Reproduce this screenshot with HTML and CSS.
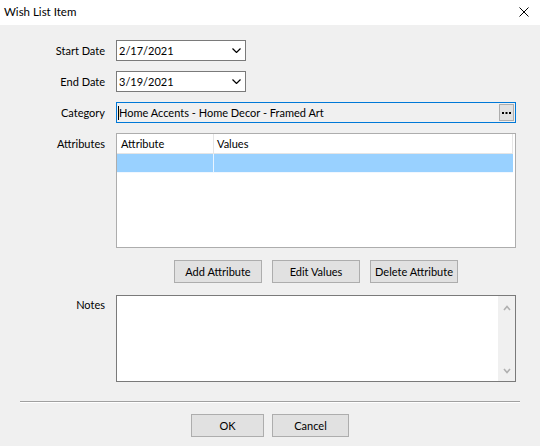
FILE: index.html
```html
<!DOCTYPE html>
<html>
<head>
<meta charset="utf-8">
<link rel="stylesheet" href="styles.css">
</head>
<body>
<div class="window">
  <div class="titlebar">
    <span class="title">Wish List Item</span>
    <svg class="close" width="10" height="10" viewBox="0 0 10 10"><path d="M0.5 0.5 L9.5 9.5 M9.5 0.5 L0.5 9.5" stroke="#000" stroke-width="1" fill="none"/></svg>
  </div>
  <div class="content">
    <div class="form">
      <label class="lbl">Start Date</label>
      <div class="combo"><span class="val">2/17/2021</span><svg class="chev" width="9" height="5" viewBox="0 0 9 5"><path d="M0.5 0.5 L4.5 4.5 L8.5 0.5" stroke="#000" stroke-width="1.2" fill="none"/></svg></div>

      <label class="lbl">End Date</label>
      <div class="combo"><span class="val">3/19/2021</span><svg class="chev" width="9" height="5" viewBox="0 0 9 5"><path d="M0.5 0.5 L4.5 4.5 L8.5 0.5" stroke="#000" stroke-width="1.2" fill="none"/></svg></div>

      <label class="lbl">Category</label>
      <div class="category"><span class="caret"></span><span class="val">Home Accents - Home Decor - Framed Art</span><span class="ellipsis"><svg width="9" height="2" viewBox="0 0 9 2"><rect x="0" y="0" width="2" height="2" fill="#000"/><rect x="3.5" y="0" width="2" height="2" fill="#000"/><rect x="7" y="0" width="2" height="2" fill="#000"/></svg></span></div>

      <label class="lbl lbl-top">Attributes</label>
      <div class="list">
        <div class="lrow header"><div class="c1">Attribute</div><div class="c2">Values</div></div>
        <div class="lrow selected"><div class="c1"></div><div class="c2"></div></div>
      </div>

      <div></div>
      <div class="btnrow">
        <button class="btn">Add Attribute</button>
        <button class="btn">Edit Values</button>
        <button class="btn">Delete Attribute</button>
      </div>

      <label class="lbl lbl-top notes-lbl">Notes</label>
      <div class="notes">
        <div class="notes-area"></div>
        <div class="scroll">
          <svg width="8" height="6" viewBox="0 0 8 6"><path d="M1 5 L4 1.5 L7 5" stroke="#b0b0b0" stroke-width="1.6" fill="none"/></svg>
          <svg width="8" height="6" viewBox="0 0 8 6"><path d="M1 1 L4 4.5 L7 1" stroke="#b0b0b0" stroke-width="1.6" fill="none"/></svg>
        </div>
      </div>
    </div>
    <div class="sep"></div>
    <div class="footer">
      <button class="btn ok">OK</button>
      <button class="btn cancel">Cancel</button>
    </div>
  </div>
</div>
</body>
</html>
```
FILE: styles.css
```css
html, body {
  margin: 0;
  padding: 0;
  background: #f0f0f0;
}
body {
  font-family: Lato, "Noto Sans", sans-serif;
  font-size: 11px;
  color: #000;
  width: 540px;
  height: 446px;
  overflow: hidden;
}
.window {
  width: 540px;
  height: 446px;
  display: flex;
  flex-direction: column;
}
.titlebar {
  height: 25px;
  background: #fff;
  display: flex;
  align-items: center;
  justify-content: space-between;
  padding: 0 11px 0 4px;
  box-sizing: border-box;
}
.title {
  font-size: 11.5px;
  line-height: 16px;
  margin-top: -2px;
}
.close {
  display: block;
  margin-top: -1px;
}
.content {
  flex: 1;
  padding-top: 15px;
}
.form {
  display: grid;
  grid-template-columns: 105px 400px;
  column-gap: 11px;
  row-gap: 10px;
}
.lbl {
  text-align: right;
  align-self: center;
  line-height: 16px;
}
.lbl-top {
  align-self: start;
  padding-top: 3px;
}
.notes-lbl {
  padding-top: 4px;
}
.combo {
  width: 130px;
  height: 21px;
  box-sizing: border-box;
  border: 1px solid #7a7a7a;
  background: #fff;
  display: flex;
  align-items: center;
  justify-content: space-between;
  padding: 0 4px 0 2px;
}
.val {
  line-height: 16px;
  white-space: nowrap;
}
.chev {
  display: block;
}
.category {
  height: 21px;
  box-sizing: border-box;
  border: 1px solid #0078d7;
  background: #f0f0f0;
  display: flex;
  align-items: center;
  padding: 0 1px 0 1px;
}
.caret {
  width: 1px;
  height: 14px;
  background: #000;
}
.category .val {
  flex: 1;
}
.ellipsis {
  width: 15px;
  height: 17px;
  box-sizing: border-box;
  border: 1px solid #adadad;
  background: #e1e1e1;
  display: flex;
  align-items: center;
  justify-content: center;
  padding-top: 1px;
}
.ellipsis svg {
  display: block;
}
.list {
  height: 115px;
  box-sizing: border-box;
  border: 1px solid #adadad;
  background: #fff;
  padding: 0 2px 0 0;
}
.lrow {
  display: flex;
}
.c1 {
  width: 97px;
  border-right: 1px solid #e5e5e5;
  padding-left: 4px;
  box-sizing: border-box;
}
.c2 {
  flex: 1;
  padding-left: 3px;
  border-right: 1px solid #e5e5e5;
}
.header {
  height: 20px;
  line-height: 19px;
  border-bottom: 1px solid #e5e5e5;
  box-sizing: border-box;
}
.selected {
  height: 18px;
  background: #99d1ff;
  border-bottom: 1px solid #f0f7ff;
}
.selected .c1 {
  border-right: 1px solid #e8f4ff;
}
.selected .c2 {
  border-right: none;
}
.btnrow {
  display: flex;
  justify-content: center;
  gap: 10px;
  margin-top: 2px;
}
.btn {
  font-family: inherit;
  font-size: 11px;
  color: #000;
  height: 23px;
  box-sizing: border-box;
  border: 1px solid #adadad;
  background: #e1e1e1;
  padding: 0;
  line-height: 20px;
  border-radius: 0;
  white-space: nowrap;
}
.btnrow .btn {
  width: 88px;
}
.notes {
  height: 87px;
  margin-top: 2px;
  box-sizing: border-box;
  border: 1px solid #7a7a7a;
  background: #fff;
  display: flex;
}
.notes-area {
  flex: 1;
}
.scroll {
  width: 17px;
  background: #f0f0f0;
  display: flex;
  flex-direction: column;
  justify-content: space-between;
  align-items: center;
  padding: 9px 0 7px;
}
.scroll svg {
  display: block;
}
.sep {
  margin: 19px 20px 0;
  height: 1px;
  background: #a0a0a0;
  border-bottom: 1px solid #fff;
}
.footer {
  display: flex;
  justify-content: center;
  gap: 8px;
  margin-top: 11px;
}
.ok {
  width: 73px;
}
.cancel {
  width: 77px;
}
```
